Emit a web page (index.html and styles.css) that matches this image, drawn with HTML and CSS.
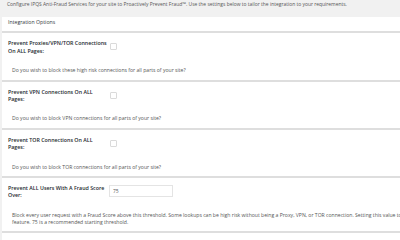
FILE: index.html
```html
<!DOCTYPE html>
<html lang="en">
<head>
    <meta charset="UTF-8">
    <meta name="viewport" content="width=device-width, initial-scale=1.0">
    <title>IPQS Anti-Fraud Settings</title>
    <link rel="stylesheet" href="styles.css">
</head>
<body>
    <p class="intro">Configure IPQS Anti-Fraud Services for your site to Proactively Prevent Fraud™. Use the settings below to tailor the integration to your requirements.</p>

    <div class="panel">
        <div class="panel-head">Integration Options</div>

        <div class="option">
            <div class="field">
                <label class="label" for="block-all">Prevent Proxies/VPN/TOR Connections On ALL Pages:</label>
                <input class="checkbox" type="checkbox" id="block-all">
            </div>
            <p class="desc">Do you wish to block these high risk connections for all parts of your site?</p>
        </div>

        <div class="option">
            <div class="field">
                <label class="label" for="block-vpn">Prevent VPN Connections On ALL Pages:</label>
                <input class="checkbox" type="checkbox" id="block-vpn">
            </div>
            <p class="desc">Do you wish to block VPN connections for all parts of your site?</p>
        </div>

        <div class="option">
            <div class="field">
                <label class="label" for="block-tor">Prevent TOR Connections On ALL Pages:</label>
                <input class="checkbox" type="checkbox" id="block-tor">
            </div>
            <p class="desc">Do you wish to block TOR connections for all parts of your site?</p>
        </div>

        <div class="option">
            <div class="field">
                <label class="label" for="score">Prevent ALL Users With A Fraud Score Over:</label>
                <input class="text" type="text" id="score" value="75">
            </div>
            <p class="desc">Block every user request with a Fraud Score above this threshold. Some lookups can be high risk without being a Proxy, VPN, or TOR connection. Setting this value to 0 will disable this feature. 75 is a recommended starting threshold.</p>
        </div>

        <div class="option">
            <div class="field">
                <label class="label" for="crawlers">Always Allow Crawlers</label>
                <input class="checkbox" type="checkbox" id="crawlers">
            </div>
        </div>
    </div>
</body>
</html>
```

FILE: styles.css
```css
html, body {
    margin: 0;
    padding: 0;
    overflow: hidden;
}
body {
    font-family: "Open Sans", "Noto Sans", sans-serif;
    font-size: 5.1px;
    line-height: 7.2px;
    color: #555;
    background-color: #f1f1f1;
    width: 400px;
    height: 240px;
}
.intro {
    margin: 0;
    padding: 0.5px 0 0 7px;
    font-size: 4.95px;
    white-space: nowrap;
}
.panel {
    margin: 9px 0 0 2px;
    width: 470px;
    background-color: #fff;
}
.panel-head {
    padding: 2.5px 0 5px 6px;
    color: #32373c;
    font-size: 5.2px;
}
.option {
    border-top: 2px solid #dedede;
    padding: 7px 0 5px 6px;
}
.field {
    display: flex;
    align-items: flex-start;
}
.label {
    width: 102px;
    flex-shrink: 0;
    font-weight: 600;
    font-size: 5.3px;
    color: #23282d;
}
.checkbox {
    appearance: none;
    width: 7px;
    height: 7px;
    margin: 3px 0 0 0;
    border: 1px solid #dadada;
    border-radius: 1px;
    background-color: #fff;
    box-sizing: border-box;
}
.text {
    width: 64px;
    height: 12px;
    margin: 0 0 0 -1px;
    padding: 0 3px;
    border: 1px solid #e4e4e4;
    box-sizing: border-box;
    font-family: inherit;
    font-size: 5px;
    color: #555;
}
.desc {
    margin: 12.5px 0 0 4px;
    width: 448px;
}
```
